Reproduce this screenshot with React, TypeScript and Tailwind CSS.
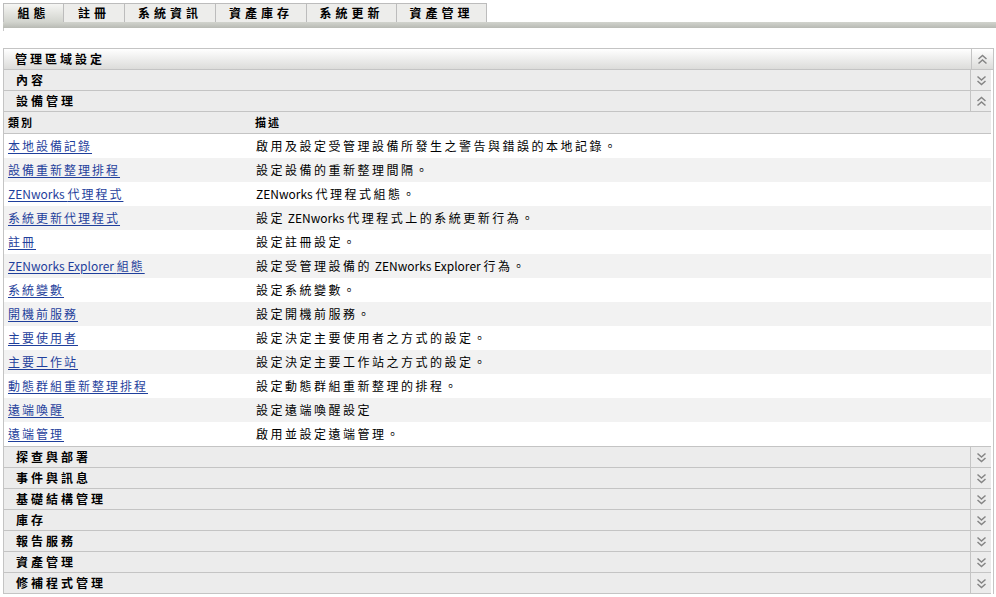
import React from 'react';

const tabs = ['組態', '註冊', '系統資訊', '資產庫存', '系統更新', '資產管理'];
const tabWidths = ['w-[61px]', 'w-[61px]', 'w-[91px]', 'w-[91px]', 'w-[90px]', 'w-[90px]'];

const rows: [string, string][] = [
  ['本地設備記錄', '啟用及設定受管理設備所發生之警告與錯誤的本地記錄。'],
  ['設備重新整理排程', '設定設備的重新整理間隔。'],
  ['ZENworks 代理程式', 'ZENworks 代理程式組態。'],
  ['系統更新代理程式', '設定 ZENworks 代理程式上的系統更新行為。'],
  ['註冊', '設定註冊設定。'],
  ['ZENworks Explorer 組態', '設定受管理設備的 ZENworks Explorer 行為。'],
  ['系統變數', '設定系統變數。'],
  ['開機前服務', '設定開機前服務。'],
  ['主要使用者', '設定決定主要使用者之方式的設定。'],
  ['主要工作站', '設定決定主要工作站之方式的設定。'],
  ['動態群組重新整理排程', '設定動態群組重新整理的排程。'],
  ['遠端喚醒', '設定遠端喚醒設定'],
  ['遠端管理', '啟用並設定遠端管理。'],
];

const collapsed = ['探查與部署', '事件與訊息', '基礎結構管理', '庫存', '報告服務', '資產管理', '修補程式管理'];

const CJK = /([\u3000-\u9fff\uff00-\uffef]+)/;

// CJK glyphs in the original are spaced wider than Latin text, so pad only those runs
function Spaced({ text, wide }: { text: string; wide?: boolean }) {
  const parts = text.split(CJK).filter(Boolean);
  return (
    <>
      {parts.map((p, i) =>
        CJK.test(p) ? (
          <span key={i} className={wide ? 'tracking-[2.5px]' : 'tracking-[2px]'}>
            {p}
          </span>
        ) : (
          <span key={i}>{p}</span>
        )
      )}
    </>
  );
}

function Chevrons({ up }: { up?: boolean }) {
  return (
    <svg width="11" height="11" viewBox="0 0 11 11" className={up ? 'rotate-180' : ''}>
      <path d="M1.5 1.5 L5.5 5 L9.5 1.5" fill="none" stroke="#858585" strokeWidth="1.5" />
      <path d="M1.5 6 L5.5 9.5 L9.5 6" fill="none" stroke="#858585" strokeWidth="1.5" />
    </svg>
  );
}

function SectionRow({ label, up }: { label: string; up?: boolean }) {
  return (
    <div className="mr-[2px] flex h-[21px] border-b border-[#c4c4c4] bg-[#ececec]">
      <div className="flex flex-1 items-center pl-[12px] text-[12px] font-bold tracking-[3px] text-black">{label}</div>
      <div className="flex w-[21px] items-center justify-center border-l border-[#c4c4c4]">
        <Chevrons up={up} />
      </div>
    </div>
  );
}

export default function App() {
  return (
    <div
      className="h-[597px] w-[996px] overflow-hidden bg-white"
      style={{ fontFamily: '"Noto Sans CJK TC", "DejaVu Sans", sans-serif' }}
    >
      <div className="flex pl-[3px] pt-[3px]">
        {tabs.map((t, i) => (
          <div
            key={t}
            className={`flex h-[19px] items-center justify-center border-t border-r border-[#bcbcbc] text-[12px] font-bold tracking-[4px] text-black ${tabWidths[i]} ${
              i === 0 ? 'border-l bg-gradient-to-b from-[#f6f6f4] to-[#d2d4ce]' : 'bg-[#ededeb]'
            }`}
          >
            {t}
          </div>
        ))}
      </div>
      <div className="ml-[3px] h-[6px] bg-gradient-to-b from-[#d2d4ce] to-[#b8bab4]" />
      <div className="ml-[3px] h-[3px] w-px bg-[#c8c8c8]" />

      <div className="ml-[3px] mt-[17px] w-[991px] border-x border-t border-[#c4c4c4]">
        <div className="flex h-[21px] border-b border-[#c4c4c4] bg-gradient-to-b from-white to-[#dcdcda]">
          <div className="flex flex-1 items-center pl-[11px] text-[12px] font-bold tracking-[3px] text-black">管理區域設定</div>
          <div className="flex w-[22px] items-center justify-center border-l border-[#c4c4c4]">
            <Chevrons up />
          </div>
        </div>
        <SectionRow label="內容" />
        <SectionRow label="設備管理" up />

        <div className="mr-[2px] flex h-[22px] items-center border-b border-[#c4c4c4] bg-[#ececec] text-[11px] font-bold tracking-[2px] text-black">
          <div className="w-[248px] pl-[4px]">類別</div>
          <div className="pl-[3px]">描述</div>
        </div>

        {rows.map(([name, desc], i) => (
          <div
            key={name}
            className={`mr-[2px] flex h-[24px] items-center text-[12px] ${i % 2 === 1 ? 'bg-[#f2f2f2]' : 'bg-white'}`}
          >
            <div className="w-[248px] pl-[4px]">
              <a href="#" className="text-[#1f3f9c] underline underline-offset-2">
                <Spaced text={name} />
              </a>
            </div>
            <div className="pl-[4px] text-black">
              <Spaced text={desc} wide />
            </div>
          </div>
        ))}
        <div className="mr-[2px] border-b border-[#c4c4c4]" />

        {collapsed.map((c) => (
          <SectionRow key={c} label={c} />
        ))}
      </div>
    </div>
  );
}
